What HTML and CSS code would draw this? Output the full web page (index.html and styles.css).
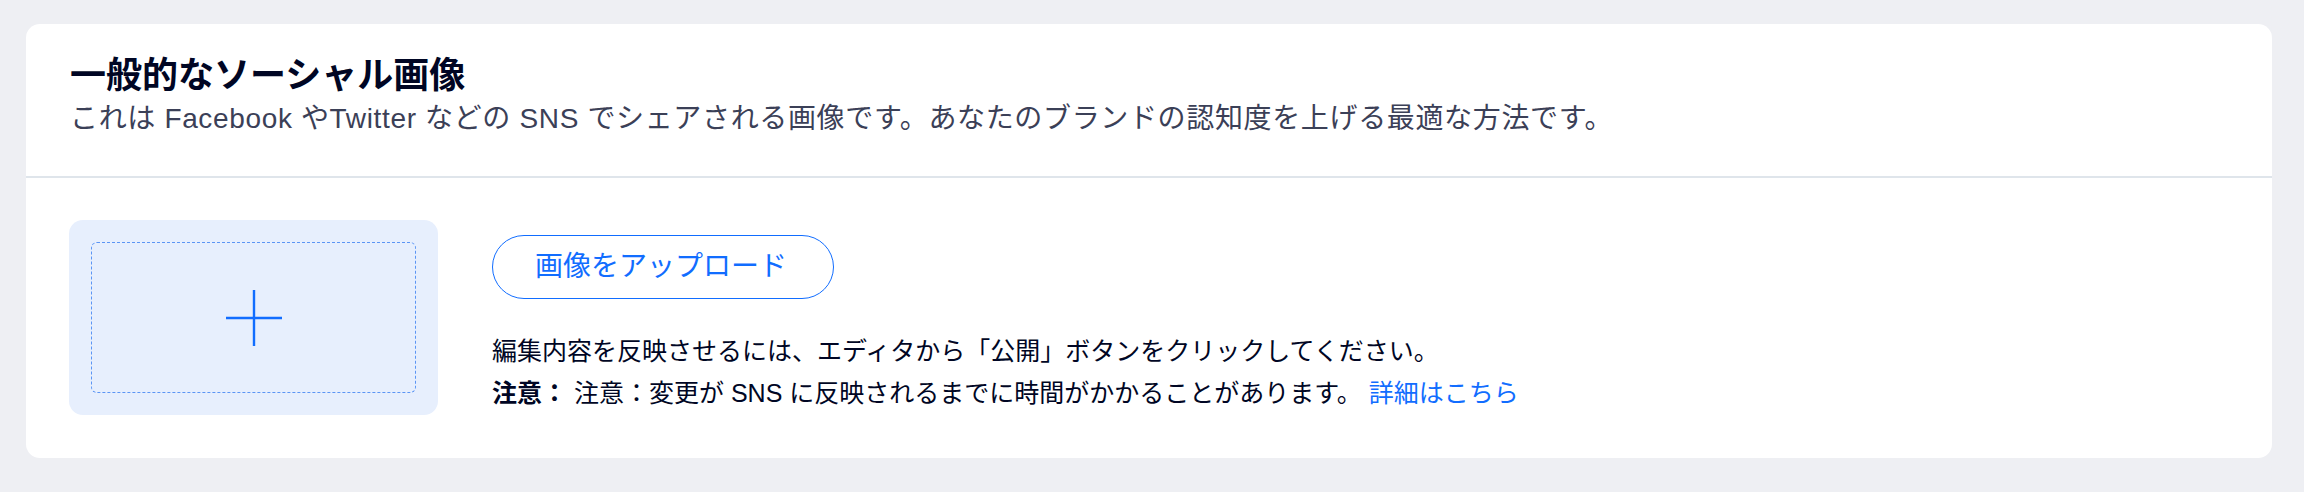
FILE: index.html
```html
<!DOCTYPE html>
<html lang="ja">
<head>
<meta charset="utf-8">
<title>一般的なソーシャル画像</title>
<link rel="stylesheet" href="styles.css">
</head>
<body>
<div class="page">
  <section class="card">
    <header class="card-header">
      <h1 class="title">一般的なソーシャル画像</h1>
      <p class="subtitle">これは Facebook やTwitter などの SNS でシェアされる画像です。あなたのブランドの認知度を上げる最適な方法です。</p>
    </header>
    <div class="card-body">
      <div class="dropzone">
        <div class="dropzone-inner">
          <svg class="plus" width="56" height="56" viewBox="0 0 56 56" aria-hidden="true">
            <path d="M28 0V56M0 28H56" stroke="#116DFF" stroke-width="2.4" fill="none"/>
          </svg>
        </div>
      </div>
      <div class="details">
        <button class="upload-btn" type="button">画像をアップロード</button>
        <div class="notes">
          <p class="note">編集内容を反映させるには、エディタから「公開」ボタンをクリックしてください。</p>
          <p class="note"><strong class="note-label">注意：</strong> 注意：変更が SNS に反映されるまでに時間がかかることがあります。 <a class="link" href="#">詳細はこちら</a></p>
        </div>
      </div>
    </div>
  </section>
</div>
</body>
</html>
```

FILE: styles.css
```css
* { box-sizing: border-box; }

html, body {
  margin: 0;
  padding: 0;
  background: #eeeff3;
}

body {
  font-family: "Liberation Sans", "Noto Sans CJK JP", sans-serif;
  color: #000624;
}

.page {
  padding: 24px 32px 34px 26px;
}

.card {
  background: #ffffff;
  border-radius: 14px;
  overflow: hidden;
}

.card-header {
  padding: 27px 44px 0 44px;
  height: 154px;
  border-bottom: 2px solid #dfe5eb;
}

.title {
  margin: 0;
  font-size: 36px;
  line-height: 50px;
  font-weight: 700;
  color: #000624;
}

.subtitle {
  margin: 0;
  font-size: 28px;
  line-height: 36px;
  letter-spacing: 0.65px;
  font-weight: 400;
  color: #3b4057;
}

.card-body {
  display: flex;
  align-items: flex-start;
  gap: 54px;
  padding: 42px 43px 43px 43px;
}

.dropzone {
  width: 369px;
  height: 195px;
  flex: none;
  background: #e7effd;
  border-radius: 14px;
  padding: 22px;
}

.dropzone-inner {
  width: 100%;
  height: 100%;
  border: 1.5px dashed #5b95f5;
  border-radius: 6px;
  display: flex;
  align-items: center;
  justify-content: center;
}

.plus { display: block; }

.details {
  display: flex;
  flex-direction: column;
  align-items: flex-start;
  padding-top: 15px;
}

.upload-btn {
  height: 64px;
  padding: 0 46px 0 42px;
  border: 1.5px solid #116dff;
  border-radius: 32px;
  background: #ffffff;
  color: #116dff;
  font-family: "Liberation Sans", "Noto Sans CJK JP", sans-serif;
  font-size: 28px;
  line-height: 1;
  cursor: pointer;
}

.notes {
  margin-top: 31px;
}

.note {
  margin: 0;
  font-size: 25px;
  line-height: 42px;
  color: #000624;
}

.note-label {
  font-weight: 700;
}

.link {
  color: #116dff;
  text-decoration: none;
}
```
